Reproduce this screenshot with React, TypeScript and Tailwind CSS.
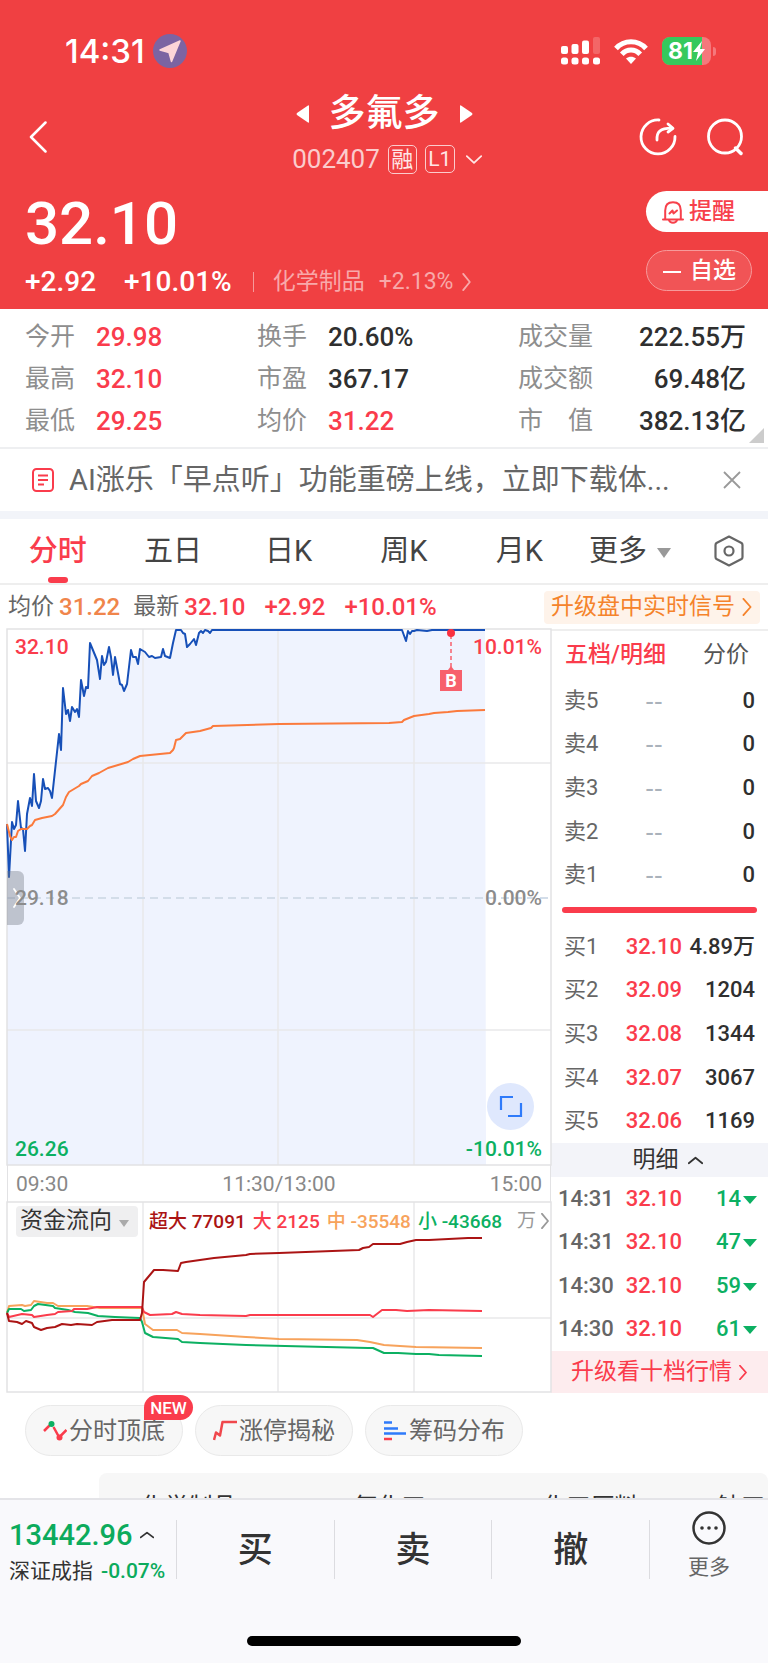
import { ReactNode } from "react";

interface Quote {
  label: string;
  price: string;
  volume: string;
}

interface Series {
  color: string;
  points: string;
}

const stats = [
  [
    { label: "今开", value: "29.98", up: true },
    { label: "换手", value: "20.60%", up: false },
    { label: "成交量", value: "222.55万", up: false },
  ],
  [
    { label: "最高", value: "32.10", up: true },
    { label: "市盈", value: "367.17", up: false },
    { label: "成交额", value: "69.48亿", up: false },
  ],
  [
    { label: "最低", value: "29.25", up: true },
    { label: "均价", value: "31.22", up: true },
    { label: "市　值", value: "382.13亿", up: false },
  ],
];

const periods = ["分时", "五日", "日K", "周K", "月K"];

const asks: Quote[] = [5, 4, 3, 2, 1].map((n) => ({ label: `卖${n}`, price: "--", volume: "0" }));

const bids: Quote[] = [
  { label: "买1", price: "32.10", volume: "4.89万" },
  { label: "买2", price: "32.09", volume: "1204" },
  { label: "买3", price: "32.08", volume: "1344" },
  { label: "买4", price: "32.07", volume: "3067" },
  { label: "买5", price: "32.06", volume: "1169" },
];

const trades = [
  { time: "14:31", price: "32.10", volume: 14 },
  { time: "14:31", price: "32.10", volume: 47 },
  { time: "14:30", price: "32.10", volume: 59 },
  { time: "14:30", price: "32.10", volume: 61 },
];

const pricePoints =
  "0,195 2,248 5,193 7,200 9,196 11,172 14,199 16,200 18,222 20,185 23,169 25,177 27,145 29,172 32,179 34,172 36,150 38,160 41,159 43,162 45,169 52,105 54,121 56,59 59,85 61,81 63,92 65,78 68,83 70,80 72,88 74,51 77,67 79,58 81,59 83,14 90,31 93,50 95,27 97,36 99,33 102,18 104,28 106,46 108,28 111,44 113,55 115,56 117,62 120,55 124,21 126,28 129,28 131,35 133,20 138,23 142,28 145,27 148,29 154,28 156,20 158,27 163,29 166,14 169,1 174,1 176,4 178,5 180,18 183,15 187,10 189,16 192,4 194,2 196,4 198,1 201,2 203,4 205,1 395,1 399,12 401,2 403,5 405,2 407,2 410,1 420,2 425,1 478,1";

const averagePoints =
  "0,195 3,207 5,211 7,208 9,208 11,202 14,200 20,200 23,197 25,196 28,191 35,189 45,187 48,185 56,176 59,168 62,163 72,157 74,155 81,152 85,147 92,144 101,139 121,133 126,130 133,127 163,124 166,121 167,119 169,111 173,110 179,104 193,102 204,99 206,97 272,95 382,94 395,93 397,91 407,87 422,85 427,84 441,83 450,82 478,81";

const flows: Series[] = [
  {
    color: "#f7a35c",
    points:
      "0,111 2,104 15,103 18,104 24,103 27,99 40,101 46,101 51,104 80,104 93,106 135,106 138,122 146,128 170,128 175,131 193,132 239,135 272,137 350,138 363,140 377,143 409,145 475,146",
  },
  {
    color: "#0cb062",
    points:
      "0,111 2,107 14,107 17,109 24,108 27,104 31,102 46,104 48,106 61,108 68,110 81,111 91,114 108,115 133,116 135,120 138,131 146,135 171,137 175,140 193,141 239,143 361,146 366,146 377,151 391,151 409,152 422,152 432,153 475,154",
  },
  {
    color: "#fa3c4c",
    points:
      "0,111 2,115 15,112 25,113 27,115 40,113 48,112 51,110 65,109 67,107 80,107 90,105 135,105 137,110 143,113 165,112 169,110 175,112 193,113 239,114 243,113 363,113 366,115 375,108 389,108 400,109 422,108 475,109",
  },
  {
    color: "#ab1414",
    points:
      "0,111 2,119 10,120 15,122 19,119 25,121 27,125 34,128 40,126 48,125 55,122 64,123 70,122 85,123 90,120 105,118 133,118 135,111 137,80 147,68 156,68 171,69 174,61 179,60 207,56 239,53 243,52 272,51 352,48 356,46 362,45 366,42 393,42 400,40 409,38 422,38 461,36 475,36",
  },
];

const legends = [
  { name: "超大", value: "77091", color: "text-[#ab1414]" },
  { name: "大", value: "2125", color: "text-[#fa3c4c]" },
  { name: "中", value: "-35548", color: "text-[#f7a35c]" },
  { name: "小", value: "-43668", color: "text-[#0cb062]" },
];

function Chevron({ d, className }: { d: string; className: string }) {
  return (
    <svg viewBox="0 0 20 20" preserveAspectRatio="none" className={className} fill="none" stroke="currentColor" strokeWidth="1.800">
      <path d={d} vectorEffect="non-scaling-stroke" strokeLinecap="round" strokeLinejoin="round" />
    </svg>
  );
}

const RIGHT = "M4 1 L16 10 L4 19";
const DOWN = "M1 4 L10 16 L19 4";
const UP = "M1 16 L10 4 L19 16";

function StatusBar() {
  return (
    <div className="flex items-center h-[34px] pl-[65px] pr-[52px]">
      <span className="text-[33px] leading-[34px] font-medium font-[Inter,sans-serif]">14:31</span>
      <svg viewBox="0 0 34 34" className="w-[34px] h-[34px] ml-[8px]">
        <circle cx="17" cy="17" r="17" fill="#7c64a2" />
        <path d="M27 7 L18.5 27.5 L16 18.5 L7 16 Z" fill="#fdd5d8" stroke="#fdd5d8" strokeWidth="1.5" strokeLinejoin="round" />
      </svg>
      <svg viewBox="0 0 39 28" className="w-[39px] h-[28px] ml-auto" fill="#fff">
        <rect x="0" y="9" width="7" height="8" rx="2" />
        <rect x="10.5" y="7" width="7" height="10" rx="2" />
        <rect x="21" y="3.500" width="7" height="13.500" rx="2" />
        <rect x="32" y="0" width="7" height="17" rx="2" opacity=".2" />
        {[0, 10.5, 21, 32].map((x) => (
          <rect key={x} x={x} y="20.500" width="7" height="7" rx="2.500" />
        ))}
      </svg>
      <svg viewBox="0 0 34 25" className="w-[34px] h-[25px] ml-[14px]" fill="none" stroke="#fff" strokeWidth="5">
        <path d="M2 9.500 C10 0.500 24 0.500 32 9.500" />
        <path d="M7.800 15.200 C13 9.500 21 9.500 26.200 15.200" />
        <path d="M12 19.500 C15 17 19 17 22 19.500 L17 25 Z" fill="#fff" stroke="none" />
      </svg>
      <div className="relative w-[49px] h-[28px] ml-[14px] rounded-[8px] overflow-hidden bg-[#f5787c]">
        <div className="w-[40px] h-full bg-[#36c95c]" />
        <div className="absolute inset-0 pl-[6px] flex items-center">
          <span className="text-[23px] leading-[28px] font-bold font-[Inter,sans-serif]">81</span>
          <svg viewBox="0 0 12 20" className="w-[12px] h-[20px]" fill="#fff">
            <path d="M9 0 L0 11 H5 L3 20 L12 8 H7 Z" />
          </svg>
        </div>
      </div>
      <div className="w-[3px] h-[9px] ml-[2px] rounded-r-full bg-[#f5787c]" />
    </div>
  );
}

function Header() {
  return (
    <header className="bg-[#f04042] text-white h-[309px] pt-[34px]">
      <StatusBar />
      <div className="grid grid-cols-[1fr_auto_1fr] items-center mt-[20px] h-[92px] px-[24px]">
        <button aria-label="返回" className="w-[18px] h-[32px] mt-[5px] ml-[5px]">
          <svg viewBox="0 0 18 32" className="w-[18px] h-[32px]" fill="none" stroke="#fff" strokeWidth="2.500" strokeLinecap="round" strokeLinejoin="round">
            <path d="M16.500 1.500 L2 16 L16.500 30.500" />
          </svg>
        </button>
        <div className="flex flex-col items-center">
          <div className="flex items-center gap-[20px] h-[50px]">
            <button aria-label="上一只">
              <svg viewBox="0 0 13 18" className="w-[13px] h-[18px]" fill="#fff"><path d="M13 1 V17 Q13 18 12 17.500 L1 10 Q0 9 1 8 L12 .5 Q13 0 13 1Z" /></svg>
            </button>
            <h1 className="text-[37px] leading-[50px] font-medium">多氟多</h1>
            <button aria-label="下一只">
              <svg viewBox="0 0 13 18" className="w-[13px] h-[18px]" fill="#fff"><path d="M0 1 V17 Q0 18 1 17.500 L12 10 Q13 9 12 8 L1 .5 Q0 0 0 1Z" /></svg>
            </button>
          </div>
          <div className="flex items-center gap-[8px] h-[40px] pl-[6px]">
            <span className="text-[26px] leading-[40px] text-[#fbcccd]">002407</span>
            <span className="w-[29px] h-[29px] border border-[#fbcccd] rounded-[5px] text-[22px] leading-[27px] text-center text-[#ffe6e6]">融</span>
            <span className="w-[30px] h-[28px] border border-[#fbcccd] rounded-[5px] text-[21px] leading-[26px] text-center text-[#ffe6e6]">L1</span>
            <Chevron d={DOWN} className="w-[16px] h-[11px] ml-[3px] text-[#ffe6e6]" />
          </div>
        </div>
        <div className="flex justify-end items-center gap-[29px] mt-[5px]">
          <button aria-label="分享">
            <svg viewBox="0 0 38 38" className="w-[38px] h-[38px]" fill="none" stroke="#fff" strokeWidth="2.800" strokeLinecap="round" strokeLinejoin="round">
              <path d="M20 2 A17 17 0 1 0 36 18.500" />
              <path d="M18 22 C17.500 14 21 10.200 32.500 10.200" />
              <path d="M29 6 L34 10.300 L29 14" />
            </svg>
          </button>
          <button aria-label="搜索">
            <svg viewBox="0 0 38 38" className="w-[38px] h-[38px]" fill="none" stroke="#fff" strokeWidth="2.800" strokeLinecap="round">
              <circle cx="19" cy="18.500" r="16.500" />
              <path d="M29.500 30 L35 35.500" strokeWidth="3.500" />
            </svg>
          </button>
        </div>
      </div>
      <div className="flex justify-between">
        <div className="pl-[25px]">
          <div className="mt-[13px] text-[60px] leading-[62px] font-medium">32.10</div>
          <div className="flex items-center h-[54px] text-[28px] font-medium">
            <span>+2.92</span>
            <span className="ml-[28px]">+10.01%</span>
            <span className="w-px h-[20px] ml-[21px] bg-[#f69a9b]" />
            <a href="#industry" className="flex items-center ml-[19px] text-[23px] font-normal text-[#f8a9aa]">
              化学制品
              <span className="ml-[14px] text-[23px]">+2.13%</span>
              <Chevron d={RIGHT} className="w-[11px] h-[18px] ml-[8px]" />
            </a>
          </div>
        </div>
        <div className="flex flex-col w-[122px] pt-[11px]">
          <button className="flex items-center h-[41px] pt-[2px] pl-[16px] rounded-l-full bg-white text-[#f7404b] text-[23px] font-medium">
            <svg viewBox="0 0 22 23" className="w-[22px] h-[23px] mr-[5px]" fill="none" stroke="#f7404b" strokeWidth="2" strokeLinecap="round" strokeLinejoin="round">
              <path d="M1 18.500 H21 M3.200 18 V9.500 C3.200 4 6 1.200 11 1.200 C16 1.200 18.800 4 18.800 9.500 V18" />
              <path d="M7 19 C8 22.500 14 22.500 15 19 M7.500 12.500 L10.500 9.500 L11.500 12.500 L15 9.500" />
            </svg>
            提醒
          </button>
          <button className="flex items-center w-[106px] h-[41px] mt-[18px] pt-[2px] pl-[16px] rounded-full border border-[#f69a9b] bg-[#f15456] text-[23px] font-medium">
            <span className="w-[18px] h-[2px] mr-[9px] bg-white" />
            自选
          </button>
        </div>
      </div>
    </header>
  );
}

function Stats() {
  return (
    <section className="relative pt-[7px] pb-[5px] border-b-2 border-[#eeeff1]">
      <table className="w-full">
        <tbody>
          {stats.map((row) => (
            <tr key={row[0].label} className="h-[42px] text-[26px] leading-[42px]">
              {row.map((cell, i) => (
                <StatCell key={cell.label} last={i === 2} first={i === 0} {...cell} />
              ))}
            </tr>
          ))}
        </tbody>
      </table>
      <svg viewBox="0 0 15 15" className="absolute right-[4px] bottom-[4px] w-[15px] h-[15px]" fill="#ccc"><path d="M15 0 V15 H0 Z" /></svg>
    </section>
  );
}

function StatCell({ label, value, up, first, last }: { label: string; value: string; up: boolean; first: boolean; last: boolean }) {
  return (
    <>
      <th className={`p-0 text-left font-normal text-[25px] text-[#8e8e8e] ${first ? "w-[96px] pl-[25px]" : last ? "w-[90px]" : "w-[71px]"}`}>{label}</th>
      <td className={`p-0 font-medium ${up ? "text-[#fa3c4c]" : "text-[#2f2f2f]"} ${last ? "text-right pr-[22px]" : first ? "w-[161px]" : "w-[190px]"}`}>{value}</td>
    </>
  );
}

function Notice() {
  return (
    <div className="flex items-center h-[70px] pl-[32px] pr-[27px] border-b-8 border-[#f2f4f9] text-[#666]">
      <svg viewBox="0 0 22 24" className="w-[22px] h-[24px] shrink-0" fill="none" stroke="#fa3c4c" strokeWidth="2">
        <rect x="1" y="1" width="20" height="22" rx="3.500" />
        <path d="M6 7.500 H16 M6 12 H16 M6 16.500 H12" />
      </svg>
      <p className="ml-[15px] text-[29px] leading-[40px] w-[610px] truncate">AI涨乐「早点听」功能重磅上线，立即下载体...</p>
      <button aria-label="关闭" className="ml-auto text-[#999]">
        <svg viewBox="0 0 18 18" className="w-[18px] h-[18px]" fill="none" stroke="currentColor" strokeWidth="1.800"><path d="M1 1 L17 17 M17 1 L1 17" /></svg>
      </button>
    </div>
  );
}

function Tabs() {
  return (
    <nav className="flex items-center h-[66px] pr-[24px] border-b-2 border-[#eee] text-[29px] text-[#444]">
      {periods.map((name, i) => (
        <button key={name} className={`relative flex-1 h-full pt-[2px] ${i === 0 ? "text-[#fa3c4c] font-medium" : ""}`}>
          {name}
          {i === 0 && <span className="absolute left-1/2 -translate-x-1/2 bottom-0 w-[20px] h-[6px] rounded-[3px] bg-[#fa3c4c]" />}
        </button>
      ))}
      <button className="flex items-center h-full pt-[2px] ml-[12px]">
        更多
        <svg viewBox="0 0 14 10" className="w-[14px] h-[10px] ml-[10px] mt-[2px]" fill="#999"><path d="M0 0 H14 L7 10 Z" /></svg>
      </button>
      <button aria-label="设置" className="ml-[43px]">
        <svg viewBox="0 0 30 32" className="w-[30px] h-[32px]" fill="none" stroke="#666" strokeWidth="2.200" strokeLinejoin="round">
          <path d="M15 1.500 L27.500 8 Q28.500 8.700 28.500 10 V22 Q28.500 23.300 27.500 24 L15 30.500 L2.500 24 Q1.500 23.300 1.500 22 V10 Q1.500 8.700 2.500 8 Z" />
          <circle cx="15" cy="16" r="4.500" />
        </svg>
      </button>
    </nav>
  );
}

function PriceLine() {
  return (
    <div className="flex items-center h-[44px] px-[8px] text-[24px] text-[#fa3c4c] font-medium">
      <span className="text-[23px] font-normal text-[#666]">均价</span>
      <span className="ml-[5px] text-[#f0854b]">31.22</span>
      <span className="ml-[13px] text-[23px] font-normal text-[#666]">最新</span>
      <span className="ml-[5px]">32.10</span>
      <span className="ml-[19px]">+2.92</span>
      <span className="ml-[19px]">+10.01%</span>
      <a href="#signal" className="flex items-center h-[33px] ml-auto px-[7px] rounded-[4px] bg-[#fef3ea] text-[#f5832b] text-[23px] font-normal">
        升级盘中实时信号
        <Chevron d={RIGHT} className="w-[12px] h-[18px] ml-[6px]" />
      </a>
    </div>
  );
}

function Grid({ height, rows }: { height: number; rows: number[] }) {
  return (
    <g stroke="#e8e8ea" strokeWidth="1.500">
      {[136, 271, 407].map((x) => (
        <line key={x} x1={x} x2={x} y1="0" y2={height} />
      ))}
      {rows.map((y) => (
        <line key={y} x1="0" x2="544" y1={y} y2={y} />
      ))}
    </g>
  );
}

function AxisLabel({ className, children }: { className: string; children: ReactNode }) {
  return <span className={`absolute leading-[24px] ${className}`}>{children}</span>;
}

function PriceChart() {
  return (
    <div className="relative text-[21px] font-medium">
      <svg viewBox="0 0 544 536" className="block w-full overflow-visible" fill="none">
        <polygon points={`0,536 ${pricePoints} 479,536`} fill="#eff3fe" />
        <Grid height={536} rows={[134, 401]} />
        <rect width="544" height="536" stroke="#e2e2e4" strokeWidth="1.500" />
        <path d="M0 269 H544" stroke="#d3dde9" strokeWidth="2" strokeDasharray="8 5" />
        <polyline points={pricePoints} stroke="#1750b8" strokeWidth="2" strokeLinejoin="round" />
        <polyline points={averagePoints} stroke="#fb7a3c" strokeWidth="2" strokeLinejoin="round" />
        <path d="M444 6 V40" stroke="#f7606c" strokeWidth="1.500" strokeDasharray="4 3" />
        <circle cx="444" cy="4" r="4" fill="#fa3040" />
        <path d="M433 41 H441 L444 37 L447 41 H455 V62 H433 Z" fill="#f7606c" />
        <text x="444" y="58" fill="#fff" fontSize="18" fontWeight="700" textAnchor="middle">B</text>
      </svg>
      <button aria-label="展开" className="absolute left-0 top-[242px] w-[17px] h-[54px] pl-[5px] rounded-r-[6px] bg-[#757b88]/40 text-white">
        <Chevron d={RIGHT} className="w-[10px] h-[20px]" />
      </button>
      <AxisLabel className="left-[8px] top-[6px] text-[#fa3c4c]">32.10</AxisLabel>
      <AxisLabel className="right-[9px] top-[6px] text-[#fa3c4c]">10.01%</AxisLabel>
      <AxisLabel className="left-[8px] top-[257px] text-[#8c8c8c]">29.18</AxisLabel>
      <AxisLabel className="right-[9px] top-[257px] text-[#8c8c8c]">0.00%</AxisLabel>
      <AxisLabel className="left-[8px] bottom-[4px] text-[#0cb062]">26.26</AxisLabel>
      <AxisLabel className="right-[9px] bottom-[4px] text-[#0cb062]">-10.01%</AxisLabel>
      <button aria-label="全屏" className="absolute right-[17px] bottom-[35px] w-[47px] h-[47px] rounded-full bg-[#dfe8fd]">
        <svg viewBox="0 0 47 47" className="w-[47px] h-[47px]" fill="none" stroke="#2f7bfa" strokeWidth="2.200">
          <path d="M14 27 V14 H26 M34 20 V33 H21" />
        </svg>
      </button>
    </div>
  );
}

function FundChart() {
  return (
    <div className="relative">
      <svg viewBox="0 0 544 190" className="block w-full overflow-visible" fill="none">
        <Grid height={190} rows={[116]} />
        <rect width="544" height="190" stroke="#e2e2e4" strokeWidth="1.500" />
        {flows.map((flow) => (
          <polyline key={flow.color} points={flow.points} stroke={flow.color} strokeWidth="2" strokeLinejoin="round" />
        ))}
      </svg>
      <div className="absolute inset-x-0 top-[3px] flex items-center h-[32px] pl-[9px]">
        <div className="relative w-[122px] h-[31px] mr-[11px]">
          <select aria-label="指标" className="appearance-none block w-full h-full pl-[4px] pb-[2px] rounded-[4px] bg-[#efeff0] text-[23px] leading-[29px] text-[#333]">
            <option>资金流向</option>
          </select>
          <svg viewBox="0 0 10 7" className="absolute right-[9px] top-[14px] w-[10px] h-[7px]" fill="#aaa"><path d="M0 0 H10 L5 7 Z" /></svg>
        </div>
        {legends.map((item) => (
          <span key={item.name} className={`mr-[7px] pt-[2px] text-[19px] leading-[34px] font-medium whitespace-nowrap ${item.color}`}>
            {item.name} {item.value}
          </span>
        ))}
        <a href="#flow" className="flex items-center ml-auto mr-px text-[19px] text-[#999]">
          万
          <Chevron d={RIGHT} className="w-[10px] h-[16px] ml-[4px]" />
        </a>
      </div>
    </div>
  );
}

function QuoteTable({ rows, empty }: { rows: Quote[]; empty?: boolean }) {
  return (
    <table className="w-full h-[218px] text-[22px] leading-[28px]">
      <tbody>
        {rows.map((row) => (
          <tr key={row.label}>
            <th className="p-0 pl-[13px] text-left font-normal text-[#666]">{row.label}</th>
            <td className={`p-0 w-[62px] ${empty ? "text-center text-[26px] text-[#aab2bb] pl-[6px] font-['Liberation_Sans',sans-serif]" : "text-right text-[#fa3c4c] font-medium"}`}>{row.price}</td>
            <td className="p-0 w-[86px] pr-[13px] text-right font-medium text-[#2f2f2f] whitespace-nowrap">{row.volume}</td>
          </tr>
        ))}
      </tbody>
    </table>
  );
}

function OrderBook() {
  return (
    <aside className="flex flex-col w-[217px] border-t-2 border-[#eee]">
      <div className="flex items-center justify-between h-[48px] pl-[14px] pr-[19px] text-[23px] text-[#555]">
        <button className="text-[#fa3c4c] font-medium">五档/明细</button>
        <button>分价</button>
      </div>
      <QuoteTable rows={asks} empty />
      <div className="h-[6px] mt-[10px] mb-[12px] mx-[11px] rounded-full bg-[#fa3c4c]" />
      <QuoteTable rows={bids} />
      <button className="flex items-center justify-center h-[34px] pl-[16px] bg-[#f3f4f9] text-[23px] text-[#333]">
        明细
        <Chevron d={UP} className="w-[15px] h-[9px] ml-[9px]" />
      </button>
      <table className="w-full h-[174px] text-[22px] leading-[28px]">
        <tbody>
          {trades.map((trade) => (
            <tr key={trade.volume} className="font-medium">
              <td className="p-0 pl-[7px] text-[#666]">{trade.time}</td>
              <td className="p-0 w-[62px] text-right text-[#fa3c4c]">{trade.price}</td>
              <td className="p-0 w-[86px] pr-[11px] text-right text-[#0cb062]">
                {trade.volume}
                <svg viewBox="0 0 14 8" className="inline-block w-[14px] h-[8px] ml-[2px] align-middle" fill="#0cb062"><path d="M0 0 H14 L7 8 Z" /></svg>
              </td>
            </tr>
          ))}
        </tbody>
      </table>
      <a href="#level2" className="flex items-center justify-center h-[42px] bg-[#fdecee] text-[23px] text-[#fa3c4c]">
        升级看十档行情
        <Chevron d={RIGHT} className="w-[10px] h-[15px] ml-[6px]" />
      </a>
    </aside>
  );
}

function Pill({ label, icon, badge }: { label: string; icon: ReactNode; badge?: string }) {
  return (
    <button className="relative flex items-center justify-center w-[158px] h-[51px] rounded-full border border-[#e9e9e9] bg-[#f7f7f7] text-[24px] text-[#666]">
      <svg viewBox="0 0 24 22" className="w-[24px] h-[22px] mr-[2px]" fill="none" strokeWidth="2.500">{icon}</svg>
      {label}
      {badge && (
        <span className="absolute -right-[11px] -top-[11px] w-[49px] h-[25px] rounded-full rounded-bl-[3px] bg-[#fa3c4c] text-white text-[17px] leading-[26px] font-medium text-center">
          {badge}
        </span>
      )}
    </button>
  );
}

function Tools() {
  return (
    <div className="flex gap-[12px] h-[80px] pt-[12px] pl-[25px]">
      <Pill
        label="分时顶底"
        badge="NEW"
        icon={
          <>
            <path d="M1 11 L6.500 5.500 M10.500 7 L16 17 M17.500 16 L23.500 10" stroke="#fa3c4c" />
            <circle cx="8.500" cy="4" r="3" fill="#0cb062" />
            <circle cx="16.500" cy="17.500" r="3" fill="#fa3c4c" />
          </>
        }
      />
      <Pill label="涨停揭秘" icon={<path d="M1 20 L3 12.500 L7 15.500 L9.500 2 H24" stroke="#f0474c" strokeLinejoin="round" />} />
      <Pill
        label="筹码分布"
        icon={
          <>
            <path d="M1 2.500 H9 M1 8.500 H15 M1 13.500 H23" stroke="#2f7bfa" />
            <path d="M1 19 H9" stroke="#fa3c4c" />
          </>
        }
      />
    </div>
  );
}

function BottomBar() {
  return (
    <footer className="flex-1 bg-[#f9f9fc] border-t-2 border-[#e4e4e8]">
      <div className="flex items-center h-[98px]">
        <button className="w-[176px] pl-[9px] pt-[4px] text-left text-[21px] leading-[32px] whitespace-nowrap">
          <span className="flex items-center text-[29px] leading-[40px] font-medium text-[#0cab5c]">
            13442.96
            <Chevron d={UP} className="w-[14px] h-[8px] ml-[8px] text-[#333]" />
          </span>
          <span className="text-[#333]">深证成指</span>
          <span className="ml-[8px] font-medium text-[#0cab5c]">-0.07%</span>
        </button>
        {["买", "卖", "撤"].map((action) => (
          <button key={action} className="flex-1 h-[59px] pt-[2px] border-l border-[#dcdce0] text-[35px] leading-[57px] font-medium text-[#333]">{action}</button>
        ))}
        <button className="flex flex-col items-center w-[119px] h-[59px] justify-center pb-[8px] border-l border-[#dcdce0] text-[21px] leading-[26px] text-[#666]">
          <svg viewBox="0 0 34 34" className="w-[34px] h-[34px] mb-[9px] shrink-0" fill="none" stroke="#333" strokeWidth="2.500">
            <circle cx="17" cy="17" r="15.500" />
            {[10, 17, 24].map((x) => (
              <circle key={x} cx={x} cy="17" r="1.800" fill="#333" stroke="none" />
            ))}
          </svg>
          更多
        </button>
      </div>
      <div className="w-[274px] h-[10px] mx-auto mt-[38px] rounded-full bg-black" />
    </footer>
  );
}

export default function App() {
  return (
    <div className="flex flex-col min-h-screen bg-white font-[Roboto,'Noto_Sans_CJK_SC',sans-serif]">
      <Header />
      <Stats />
      <Notice />
      <Tabs />
      <PriceLine />
      <main className="flex pl-[7px]">
        <div className="flex-1">
          <PriceChart />
          <div className="relative flex justify-between h-[37px] px-[8px] border-x border-[#e2e2e4] text-[21px] leading-[38px] text-[#888]">
            <span>09:30</span>
            <span>11:30/13:00</span>
            <span>15:00</span>
          </div>
          <FundChart />
        </div>
        <OrderBook />
      </main>
      <Tools />
      <div className="flex h-[25px] ml-[99px] pt-[17px] rounded-t-[8px] overflow-hidden bg-[#f7f7f7] text-[24px] leading-[34px] text-[#333] whitespace-nowrap">
        {["化学制品", "氟化工", "化工原料", "钛工"].map((sector) => (
          <span key={sector} className="w-[201px] shrink-0 text-center first:-ml-[11px] last:w-auto last:pl-[26px]">{sector}</span>
        ))}
      </div>
      <BottomBar />
    </div>
  );
}
